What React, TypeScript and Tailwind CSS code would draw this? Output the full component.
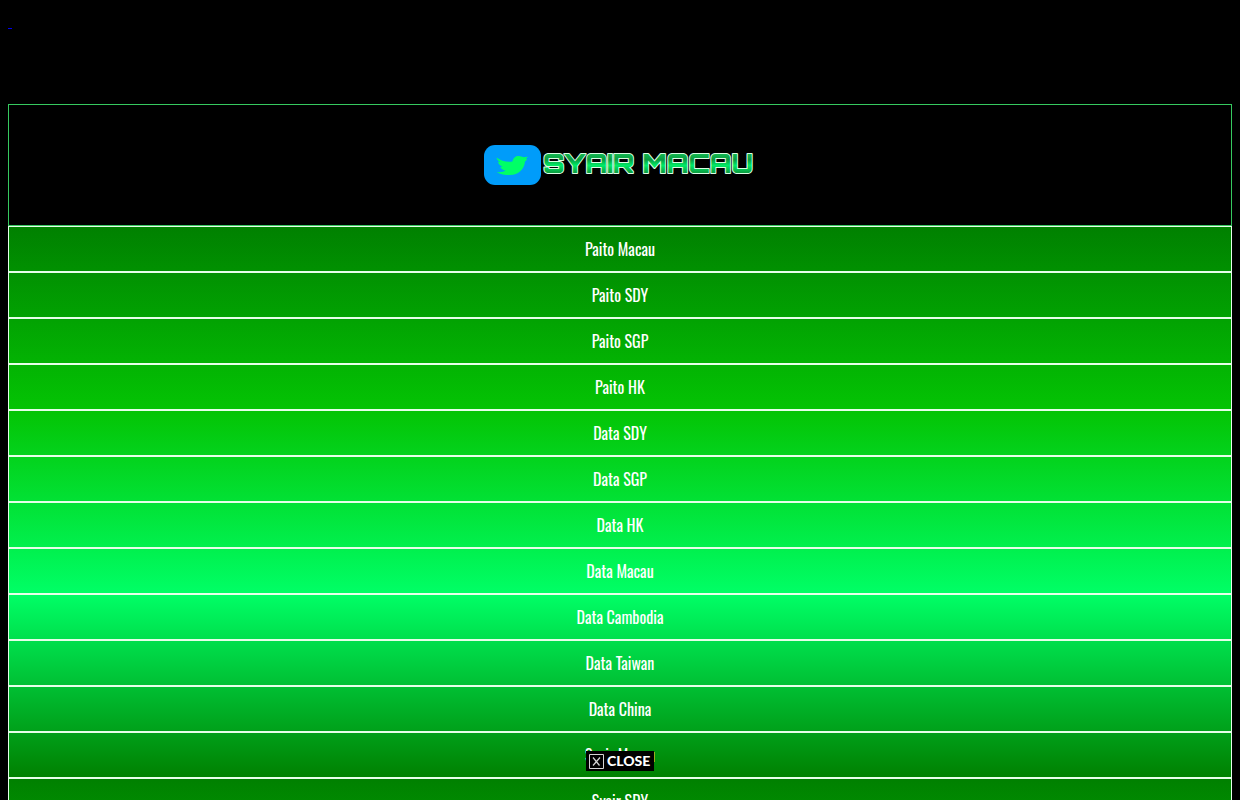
import { useState } from "react";

const links = [
  "Paito Macau",
  "Paito SDY",
  "Paito SGP",
  "Paito HK",
  "Data SDY",
  "Data SGP",
  "Data HK",
  "Data Macau",
  "Data Cambodia",
  "Data Taiwan",
  "Data China",
  "Syair Macau",
  "Syair SDY",
];

const Logo = () => (
  <svg width="280" height="60" viewBox="0 0 280 60" role="img" aria-label="Syair Macau">
    <defs>
      <linearGradient id="logo-fill" gradientUnits="userSpaceOnUse" x1="0" y1="19" x2="0" y2="38">
        <stop offset="0" stopColor="#12b850" />
        <stop offset="0.3" stopColor="#0a9a40" />
        <stop offset="0.6" stopColor="#00ec66" />
        <stop offset="1" stopColor="#0a9a3e" />
      </linearGradient>
    </defs>
    <rect x="4" y="10" width="57" height="40" rx="11" fill="#009cfa" />
    <path
      fill="#00ff66"
      d="M16.500 22.500C21 26 27 27.500 32.500 26.500C33 22.500 36.500 20.500 40 21.200C41.500 21.400 42.800 22 43.800 22.300L48 21.800L45.800 24L47.300 24.600L45 26.500C44.500 34 38.500 40 30 40C25 40 20 39.500 16.500 37C20.500 37.500 23.500 37 25.500 35.500C23 35.200 21 33.800 20.300 32L22.500 31.800C20 30.800 18.300 29 18 26.800L20.500 27.300C18 25.800 16.800 24.500 16.500 22.500Z"
    />
    <text
      x="63"
      y="38"
      fontSize="26"
      fill="url(#logo-fill)"
      stroke="#d9ffe5"
      strokeWidth="2"
      strokeLinejoin="round"
      paintOrder="stroke"
      className="font-['Orbitron','DejaVu_Sans',sans-serif] font-black"
    >
      SYAIR MACAU
    </text>
  </svg>
);

const CloseButton = ({ onClick }: { onClick: () => void }) => (
  <button
    type="button"
    onClick={onClick}
    className="fixed bottom-[29px] left-1/2 flex h-5 w-[68px] -translate-x-1/2 items-center gap-[3px] bg-black pl-[3px] font-['Lato',sans-serif] text-sm leading-5 font-black text-white"
  >
    <svg width="15" height="15" viewBox="0 0 15 15" fill="none" stroke="#d4d4d4" aria-hidden="true" className="shrink-0">
      <path d="M.5.5h14v14H.5z" />
      <path d="M4 3.5l6.5 8M11 3.5l-7 8" strokeWidth="1.2" />
    </svg>
    CLOSE
  </button>
);

export default function App() {
  const [open, setOpen] = useState(true);

  return (
    <div className="min-h-screen bg-black px-2 font-['Oswald','Roboto_Condensed','Liberation_Sans',sans-serif]">
      <div className="h-[104px] pt-2">
        <a href="#" aria-label="Banner" className="font-['Liberation_Serif',serif] text-base leading-5 whitespace-pre text-[#0000ee] underline">
          {" "}
        </a>
      </div>

      <header className="flex h-[122px] items-center justify-center border border-[#36c95f]">
        <a href="#">
          <Logo />
        </a>
      </header>

      <nav className="bg-[linear-gradient(#008000,#04c404,#00ff66,#008000)] bg-[length:100%_552px]">
        {links.map((label) => (
          <a
            key={label}
            href="#"
            className="block border border-[#e6ffe9] text-center text-base leading-[44px] text-white"
          >
            {label}
          </a>
        ))}
      </nav>

      {open && <CloseButton onClick={() => setOpen(false)} />}
    </div>
  );
}
